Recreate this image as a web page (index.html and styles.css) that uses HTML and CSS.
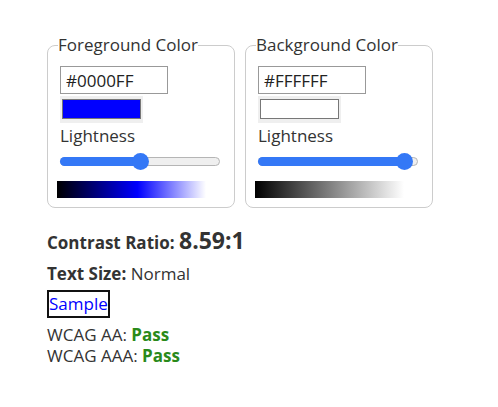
FILE: index.html
```html
<!DOCTYPE html>
<html>
<head>
	<title>Contrast Checker</title>
<link rel="stylesheet" href="styles.css">
</head>
<body>
	<div class="container">
		<div class="pickers">
			<fieldset class="picker">
				<legend>Foreground Color</legend>
				<input type="text" class="hex-input" value="#0000FF">
				<div class="swatch-wrap"><div class="swatch swatch-fg"></div></div>
				<label class="slider-label">Lightness</label>
				<div class="slider">
					<div class="slider-fill" style="width: 50%"></div>
					<div class="slider-thumb" style="left: 50%"></div>
				</div>
				<div class="gradient gradient-fg"></div>
			</fieldset>
			<fieldset class="picker">
				<legend>Background Color</legend>
				<input type="text" class="hex-input" value="#FFFFFF">
				<div class="swatch-wrap"><div class="swatch swatch-bg"></div></div>
				<label class="slider-label">Lightness</label>
				<div class="slider">
					<div class="slider-fill" style="width: 92%"></div>
					<div class="slider-thumb" style="left: 92%"></div>
				</div>
				<div class="gradient gradient-bg"></div>
			</fieldset>
		</div>

		<div class="results">
			<p class="ratio"><strong>Contrast Ratio:</strong> <span class="ratio-value">8.59:1</span></p>
			<p class="size"><strong>Text Size:</strong> Normal</p>
			<div class="sample">Sample</div>
			<p class="wcag wcag-aa">WCAG AA: <strong class="pass">Pass</strong></p>
			<p class="wcag">WCAG AAA: <strong class="pass">Pass</strong></p>
		</div>
	</div>
</body>
</html>
```

FILE: styles.css
```css
body {
	font-family: "Open Sans", Arial, sans-serif;
	font-size: 17px;
	color: #333333;
	margin: 0;
	padding: 0;
}

.container {
	padding: 33px 0 0 47px;
}

.pickers {
	display: flex;
	gap: 10px;
}

.picker {
	box-sizing: border-box;
	width: 188px;
	margin: 0;
	padding: 9px 12px 9px 12px;
	border: 1px solid #cccccc;
	border-radius: 8px;
}

.picker legend {
	padding: 0;
	margin-left: -2px;
	line-height: 24px;
}

.hex-input {
	display: block;
	box-sizing: border-box;
	width: 108px;
	height: 28px;
	margin: 0;
	padding: 0 5px;
	font-family: "Open Sans", Arial, sans-serif;
	font-size: 17px;
	color: #222222;
	border: 1px solid #999999;
	border-radius: 0;
}

.swatch-wrap {
	box-sizing: border-box;
	width: 83px;
	height: 27px;
	margin: 2px 0 2px 0;
	padding: 3px 2px 4px 2px;
	background-color: #efefef;
}

.swatch {
	box-sizing: border-box;
	height: 100%;
	border: 1px solid #777777;
}

.swatch-fg {
	background-color: #0000ff;
}

.swatch-bg {
	background-color: #ffffff;
}

.slider-label {
	display: block;
	line-height: 22px;
}

.slider {
	position: relative;
	box-sizing: border-box;
	width: 160px;
	height: 9px;
	margin-top: 10px;
	background-color: #efefef;
	border: 1px solid #b5b5b5;
	border-radius: 5px;
}

.slider-fill {
	position: absolute;
	left: -1px;
	top: -1px;
	bottom: -1px;
	background-color: #3478f6;
	border-radius: 5px;
}

.slider-thumb {
	position: absolute;
	top: 50%;
	width: 17px;
	height: 17px;
	margin: -8.5px 0 0 -8.5px;
	background-color: #3478f6;
	border-radius: 50%;
}

.gradient {
	width: 149px;
	height: 17px;
	margin: 15px 0 0 -3px;
}

.gradient-fg {
	background: linear-gradient(to right, #000000, #0000ff 54%, #ffffff);
}

.gradient-bg {
	background: linear-gradient(to right, #000000, #ffffff);
}

.results {
	padding-top: 17px;
}

.results p {
	margin: 0;
}

.ratio {
	line-height: 30px;
}

.ratio-value {
	font-size: 23px;
	font-weight: bold;
}

.size {
	margin-top: 4px !important;
	line-height: 24px;
}

.sample {
	display: inline-block;
	margin-top: 4px;
	padding: 0;
	line-height: 24px;
	color: #0000ff;
	border: 2px solid #111111;
}

.wcag {
	line-height: 21px;
}

.results .wcag-aa {
	margin-top: 6px;
}

.pass {
	color: #2a8a1a;
}
```
